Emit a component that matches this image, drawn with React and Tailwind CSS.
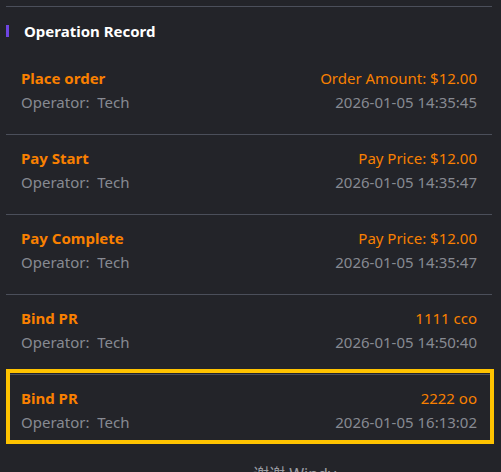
import React from "react";

const rows = [
  { title: "Place order", value: "Order Amount: $12.00", time: "2026-01-05 14:35:45" },
  { title: "Pay Start", value: "Pay Price: $12.00", time: "2026-01-05 14:35:47" },
  { title: "Pay Complete", value: "Pay Price: $12.00", time: "2026-01-05 14:35:47" },
  { title: "Bind PR", value: "1111 cco", time: "2026-01-05 14:50:40" },
  { title: "Bind PR", value: "2222 oo", time: "2026-01-05 16:13:02", highlight: true },
];

export default function App() {
  return (
    <div
      className="w-[501px] h-[472px] overflow-hidden bg-[#232429] pt-[6px] pl-[6px] pr-[9px]"
      style={{ fontFamily: '"Noto Sans", "Noto Sans CJK SC", sans-serif' }}
    >
      <div className="border-t border-[#4b4f5a]">
        <div className="flex items-center pt-[14px] pb-[14px]">
          <div className="w-[3px] h-[12px] bg-[#6e45e2]" />
          <div className="ml-[15px] text-[15px] leading-[20px] font-bold text-white">Operation Record</div>
        </div>
        {rows.map((r, i) => (
          <div
            key={i}
            className={`relative px-[15px] pt-[13px] pb-[22px] ${i > 0 ? "border-t border-[#4b4f5a]" : ""}`}
          >
            <div className="flex justify-between text-[15px] leading-[20px] text-[#f98000]">
              <span className="font-bold">{r.title}</span>
              <span>{r.value}</span>
            </div>
            <div className="mt-[4px] flex justify-between text-[15px] leading-[20px] text-[#878a92]">
              <span className="whitespace-pre">Operator:  Tech</span>
              <span>{r.time}</span>
            </div>
            {r.highlight && (
              <div className="absolute top-[-6px] left-0 right-[-2px] bottom-[10px] border-4 border-[#ffc300] pointer-events-none" />
            )}
          </div>
        ))}
        <div className="mt-[10px] pl-[247px] text-[16px] leading-[20px] text-[#9a9ca3]">谢谢 Windy</div>
      </div>
    </div>
  );
}
